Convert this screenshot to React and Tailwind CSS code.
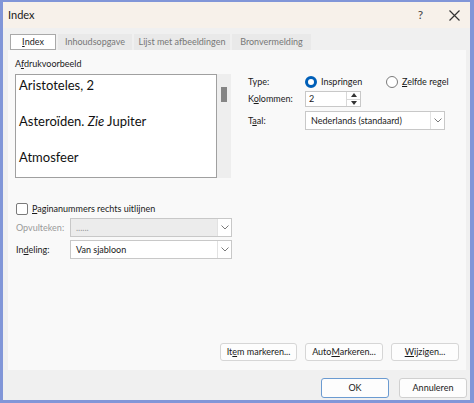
import React from 'react';

const font = { fontFamily: 'Lato, "Noto Sans", sans-serif' };

function U({ children }) {
  return <span className="underline underline-offset-[1px]">{children}</span>;
}

function Chevron() {
  return (
    <svg width="8" height="5" viewBox="0 0 8 5" fill="none">
      <path d="M0.5 0.5 L4 4 L7.5 0.5" stroke="#7a7a7a" strokeWidth="1" />
    </svg>
  );
}

function Select({ value, disabled, className }) {
  return (
    <div
      className={`flex h-[19px] items-stretch border border-[#c8c8c8] ${disabled ? 'bg-[#ececec]' : 'bg-white'} ${className}`}
    >
      <div className={`flex flex-1 items-center pl-[5px] ${disabled ? 'text-[#9a9a9a]' : 'text-[#1a1a1a]'}`}>
        {value}
      </div>
      <div className="flex w-[14px] items-center justify-center border-l border-[#e2e2e2] bg-white">
        <Chevron />
      </div>
    </div>
  );
}

function Radio({ checked }) {
  return checked ? (
    <span className="box-border block h-[12px] w-[12px] shrink-0 rounded-full border-[3px] border-[#005fb8] bg-white" />
  ) : (
    <span className="box-border block h-[12px] w-[12px] shrink-0 rounded-full border border-[#7a7a7a] bg-white" />
  );
}

function Button({ children, className }) {
  return (
    <button
      type="button"
      className={`flex h-[18px] items-center justify-center whitespace-nowrap rounded-[3px] border border-[#d6d6d6] bg-[#fdfdfd] text-[9px] text-[#1a1a1a] ${className}`}
    >
      {children}
    </button>
  );
}

export default function App() {
  return (
    <div
      style={font}
      className="box-border flex h-[403px] w-[474px] flex-col whitespace-nowrap border-t-[2px] border-r-[4px] border-b-[3px] border-l-[3px] border-[#8196d8] text-[9px] text-[#1a1a1a]"
    >
      {/* title bar */}
      <div className="flex h-[26px] items-center bg-[#f7f1ea] pl-[5px] pr-[10px]">
        <span className="text-[11px] text-[#1a1a1a]">Index</span>
        <span className="ml-auto mr-[26px] text-[12px] text-[#444]">?</span>
        <svg width="11" height="11" viewBox="0 0 11 11">
          <path d="M0.5 0.5 L10.5 10.5 M10.5 0.5 L0.5 10.5" stroke="#333" strokeWidth="1.2" />
        </svg>
      </div>

      <div className="flex flex-1 flex-col bg-[#f0f0f0] pl-[5px] pr-[4px]">
        {/* tabs */}
        <div className="mt-[6px] flex h-[16px] items-end gap-[2px] pl-[2px]">
          <div className="box-border flex h-[16px] w-[46px] items-center justify-center border border-[#a9a9a9] bg-white text-[#1a1a1a]">
            <U>I</U>ndex
          </div>
          <div className="flex h-[16px] w-[74px] items-center justify-center bg-[#e9e9e9] text-[#777]">Inhoudsopgave</div>
          <div className="flex h-[16px] w-[96px] items-center justify-center bg-[#e9e9e9] text-[#777]">Lijst met afbeeldingen</div>
          <div className="flex h-[16px] w-[79px] items-center justify-center bg-[#e9e9e9] text-[#777]">Bronvermelding</div>
        </div>

        {/* panel */}
        <div className="flex h-[320px] flex-col bg-[#f9f9f9] pl-[7px] pr-[7px]">
          <div className="mt-[7px] h-[14px] leading-[14px]">
            A<U>f</U>drukvoorbeeld
          </div>

          <div className="mt-[3px] flex">
            <div className="flex">
              <div className="box-border h-[104px] w-[202px] border border-[#a0a0a0] bg-white pl-[3px] text-[13px] leading-[18px] text-[#111]">
                <div className="mt-[1px]">Aristoteles, 2</div>
                <div className="mt-[18px]">
                  Asteroïden. <i>Zie</i> Jupiter
                </div>
                <div className="mt-[18px]">Atmosfeer</div>
              </div>
              <div className="h-[104px] w-[14px] bg-[#eeeeee] pl-[4px] pt-[13px]">
                <div className="h-[15px] w-[6px] bg-[#858585]" />
              </div>
            </div>

            <div className="ml-[17px] flex flex-col">
              <div className="flex h-[16px] items-center">
                <span className="w-[57px]">Type:</span>
                <Radio checked />
                <span className="ml-[4px] w-[65px]">Inspringen</span>
                <Radio />
                <span className="ml-[4px]">
                  <U>Z</U>elfde regel
                </span>
              </div>
              <div className="mt-[1px] flex h-[16px] items-center">
                <span className="w-[57px]">
                  K<U>o</U>lommen:
                </span>
                <div className="box-border flex h-[16px] w-[56px] border border-[#c8c8c8] bg-white">
                  <span className="flex flex-1 items-center pl-[3px]">2</span>
                  <div className="flex w-[14px] flex-col border-l border-[#d8d8d8]">
                    <div className="flex flex-1 items-center justify-center border-b border-[#d8d8d8]">
                      <svg width="6" height="4" viewBox="0 0 6 4">
                        <path d="M0 4 L3 0 L6 4 Z" fill="#333" />
                      </svg>
                    </div>
                    <div className="flex flex-1 items-center justify-center">
                      <svg width="6" height="4" viewBox="0 0 6 4">
                        <path d="M0 0 L3 4 L6 0 Z" fill="#333" />
                      </svg>
                    </div>
                  </div>
                </div>
              </div>
              <div className="mt-[4px] flex items-center">
                <span className="w-[57px]">
                  T<U>a</U>al:
                </span>
                <Select value="Nederlands (standaard)" className="box-border w-[140px]" />
              </div>
            </div>
          </div>

          <div className="mt-[24px] flex h-[13px] items-center pl-[1px]">
            <span className="box-border block h-[12px] w-[12px] rounded-[2px] border border-[#7a7a7a] bg-white" />
            <span className="ml-[4px]">
              <U>P</U>aginanummers rechts uitlijnen
            </span>
          </div>

          <div className="mt-[3px] flex items-center pl-[1px]">
            <span className="w-[54px] text-[#9a9a9a]">Opvulteken:</span>
            <Select value="......" disabled className="box-border w-[162px]" />
          </div>
          <div className="mt-[3px] flex items-center pl-[1px]">
            <span className="w-[54px]">
              In<U>d</U>eling:
            </span>
            <Select value="Van sjabloon" className="box-border w-[162px]" />
          </div>

          <div className="mt-auto mb-[9px] flex justify-end gap-[8px]">
            <Button className="w-[77px]">
              It<U>e</U>m markeren...
            </Button>
            <Button className="w-[78px]">
              Auto<U>M</U>arkeren...
            </Button>
            <Button className="w-[68px]">
              <U>W</U>ijzigen...
            </Button>
          </div>
        </div>

        {/* dialog buttons */}
        <div className="-mr-[1px] mt-[8px] flex justify-end gap-[10px]">
          <button
            type="button"
            className="flex h-[20px] w-[68px] items-center justify-center rounded-[3px] border border-[#6b9bd1] bg-[#fdfdfd] text-[9px]"
          >
            OK
          </button>
          <button
            type="button"
            className="flex h-[20px] w-[68px] items-center justify-center rounded-[3px] border border-[#d0d0d0] bg-[#fdfdfd] text-[9px]"
          >
            Annuleren
          </button>
        </div>
      </div>
    </div>
  );
}
